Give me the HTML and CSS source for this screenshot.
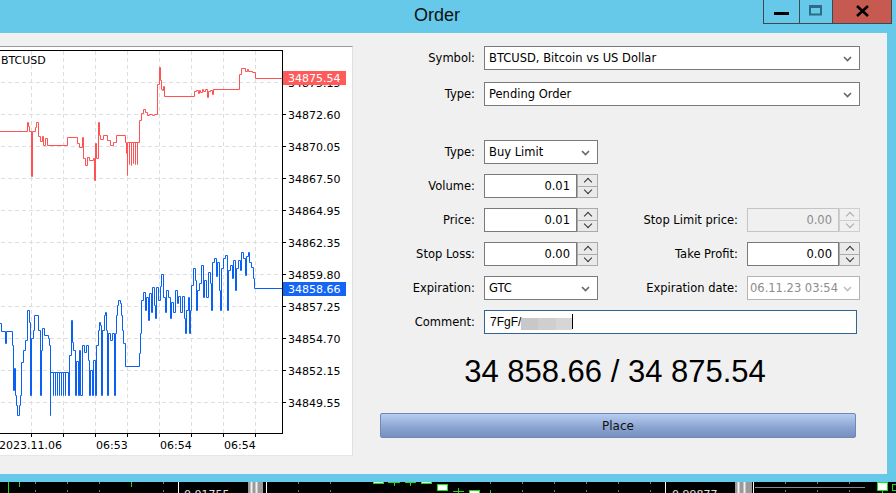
FILE: index.html
```html
<!DOCTYPE html>
<html lang="en">

<head>
  <meta charset="UTF-8">
  <meta name="viewport" content="width=device-width, initial-scale=1.0">
  <title>Order</title>
  <link rel="stylesheet" href="styles.css">
</head>

<body>
  <div class="window">
    <div class="titlebar">
      <span></span>
      <div class="title">Order</div>
      <div class="controls">
        <div class="ctl ctl_min"><svg width="16" height="4" viewBox="0 0 16 4"><rect x="0" y="0" width="15" height="3" fill="#000" /></svg></div>
        <div class="ctl ctl_max"><svg width="14" height="11" viewBox="0 0 14 11"><rect x="1" y="1.5" width="11" height="8" fill="none" stroke="#2d6c84" stroke-width="2" /><rect x="0" y="0" width="13" height="3" fill="#2d6c84" /></svg></div>
        <div class="ctl ctl_close"><svg width="13" height="12" viewBox="0 0 13 12"><path d="M1 1 L12 11 M12 1 L1 11" stroke="#000" stroke-width="2.6" /></svg></div>
      </div>
    </div>

    <div class="client">
      <!-- tick chart -->
      <div class="chart">
        <svg width="365" height="408" viewBox="-13 47 365 408" font-family="DejaVu Sans, sans-serif" font-size="11">
          <rect x="-13" y="47" width="365" height="408" fill="#fff" />
          <g stroke="#dedede" stroke-dasharray="4 3">
            <path d="M-13 82.5H282 M-13 114.5H282 M-13 146.5H282 M-13 178.5H282 M-13 210.5H282 M-13 242.5H282 M-13 274.5H282 M-13 306.5H282 M-13 338.5H282 M-13 370.5H282 M-13 402.5H282" />
            <path d="M31.5 51V433 M63.5 51V433 M95.5 51V433 M127.5 51V433 M159.5 51V433 M191.5 51V433 M223.5 51V433 M255.5 51V433" />
          </g>
          <g fill="none" stroke-width="1" transform="translate(0.5 0.5)">
            <polyline stroke="#ff5252" points="-13,131 27,131 27,122 28,122 28,126 29,126 29,131 31,131 31,176 32,176 32,131 35,131 35,127 36,127 36,122 38,122 38,136 40,136 40,141 42,141 42,136 43,136 43,145 45,145 45,138 47,138 47,145 67,145 67,137 77,137 77,143 79,143 79,147 82,147 82,137 83,137 83,158 85,158 85,165 87,165 87,157 89,157 89,160 93,160 93,158 94,158 94,180 95,180 95,143 96,143 96,158 98,158 98,122 99,122 99,135 100,135 100,139 103,139 103,135 107,135 107,140 110,140 110,145 113,145 113,142 116,142 116,135 125,135 125,142 126,142 126,153 127,153 127,175 127,142 129,142 129,164 129,142 131,142 131,165 131,142 133,142 133,163 133,142 135,142 135,164 135,142 137,142 137,164 137,142 139,142 139,120 141,120 141,113 143,113 143,109 145,109 145,112 147,112 147,115 149,115 149,114 152,114 152,115 154,115 154,114 157,114 157,84 159,84 159,67 160,67 160,80 161,80 161,89 162,89 162,90 163,90 163,86 164,86 164,96 194,96 194,91 196,91 196,90 198,90 198,93 199,93 199,90 200,90 200,92 202,92 202,89 203,89 203,91 205,91 205,89 207,89 207,97 208,97 208,91 210,91 210,90 212,90 212,94 213,94 213,89 239,89 239,74 241,74 241,68 245,68 245,71 247,71 247,69 248,69 248,71 252,71 252,72 255,72 255,78 282,78" />
            <polyline stroke="#0a60f2" points="-13,323 1,323 1,331 5,331 5,343 6,343 6,331 12,331 12,345 13,345 13,390 14,390 14,368 15,368 15,395 16,395 16,405 17,405 17,415 19,415 19,405 20,405 20,395 21,395 21,362 23,362 23,350 25,350 25,340 27,340 27,310 29,310 29,322 30,322 30,395 31,395 31,338 33,338 33,330 34,330 34,315 38,315 38,330 40,330 40,395 41,395 41,350 42,350 42,328 44,328 44,335 48,335 48,338 49,338 49,345 50,345 50,415 50,372 53,372 53,395 53,372 55,372 55,395 55,372 57,372 57,395 57,372 59,372 59,395 59,372 61,372 61,395 61,372 63,372 63,395 63,372 65,372 65,395 65,372 68,372 68,395 69,395 69,355 71,355 71,320 72,320 72,342 73,342 73,350 75,350 75,395 76,395 76,361 78,361 78,395 79,395 79,350 80,350 80,395 82,395 82,345 84,345 84,352 86,352 86,345 88,345 88,360 89,360 89,395 90,395 90,370 92,370 92,395 93,395 93,360 95,360 95,395 96,395 96,345 98,345 98,330 99,330 99,322 100,322 100,325 101,325 101,395 102,395 102,330 104,330 104,315 105,315 105,312 106,312 106,330 107,330 107,395 108,395 108,333 110,333 110,340 112,340 112,333 114,333 114,395 115,395 115,333 116,333 116,315 117,315 117,305 118,305 118,300 120,300 120,303 121,303 121,315 122,315 122,330 123,330 123,343 125,343 125,366 139,366 139,353 140,353 140,333 141,333 141,300 143,300 143,292 145,292 145,310 146,310 146,297 148,297 148,320 149,320 149,293 151,293 151,312 152,312 152,287 154,287 154,305 155,305 155,318 156,318 156,287 158,287 158,300 160,300 160,286 161,286 161,274 163,274 163,297 165,297 165,312 166,312 166,290 168,290 168,297 170,297 170,318 171,318 171,302 173,302 173,312 175,312 175,290 177,290 177,303 178,303 178,296 180,296 180,312 182,312 182,296 184,296 184,318 185,318 185,333 186,333 186,310 188,310 188,297 189,297 189,333 190,333 190,310 191,310 191,285 193,285 193,268 195,268 195,280 196,280 196,310 197,310 197,290 199,290 199,283 201,283 201,265 203,265 203,297 204,297 204,280 206,280 206,297 208,297 208,272 210,272 210,283 211,283 211,310 212,310 212,262 214,262 214,258 216,258 216,276 217,276 217,262 219,262 219,290 220,290 220,310 221,310 221,268 223,268 223,258 225,258 225,255 227,255 227,310 228,310 228,270 230,270 230,265 232,265 232,278 233,278 233,260 235,260 235,290 236,290 236,268 238,268 238,260 240,260 240,270 241,270 241,252 243,252 243,258 245,258 245,275 246,275 246,256 248,256 248,252 249,252 249,262 251,262 251,267 253,267 253,278 254,278 254,288 282,288" />
          </g>
          <rect x="-14" y="50.5" width="296.5" height="383" fill="none" stroke="#000" />
          <g stroke="#000">
            <path d="M282 82.5h4 M282 114.5h4 M282 146.5h4 M282 178.5h4 M282 210.5h4 M282 242.5h4 M282 274.5h4 M282 306.5h4 M282 338.5h4 M282 370.5h4 M282 402.5h4" />
            <path d="M31.5 433v4 M63.5 433v4 M95.5 433v4 M127.5 433v4 M159.5 433v4 M191.5 433v4 M223.5 433v4 M255.5 433v4" />
          </g>
          <text x="1" y="64" fill="#000">BTCUSD</text>
          <g fill="#000">
            <text x="288" y="87">34875.15</text>
            <text x="288" y="119">34872.60</text>
            <text x="288" y="151">34870.05</text>
            <text x="288" y="183">34867.50</text>
            <text x="288" y="215">34864.95</text>
            <text x="288" y="247">34862.35</text>
            <text x="288" y="279">34859.80</text>
            <text x="288" y="311">34857.25</text>
            <text x="288" y="343">34854.70</text>
            <text x="288" y="375">34852.15</text>
            <text x="288" y="407">34849.55</text>
          </g>
          <rect x="283" y="71" width="63" height="14" fill="#ff5b5b" />
          <text x="288" y="82" fill="#fff">34875.54</text>
          <rect x="283" y="282" width="63" height="14" fill="#1565f5" />
          <text x="288" y="293" fill="#fff">34858.66</text>
          <g fill="#000">
            <text x="-1" y="449">2023.11.06</text>
            <text x="96" y="449">06:53</text>
            <text x="160" y="449">06:54</text>
            <text x="224" y="449">06:54</text>
          </g>
        </svg>
      </div>

      <!-- order form -->
      <div class="order">
        <div class="grid grid_top">
          <div class="lbl">Symbol:</div>
          <div class="field select span3">BTCUSD, Bitcoin vs US Dollar<svg class="chev" width="9" height="6" viewBox="0 0 9 6"><path d="M1 1l3.5 3.5L8 1" fill="none" stroke="#666" stroke-width="1.6" /></svg></div>
          <div class="lbl">Type:</div>
          <div class="field select span3">Pending Order<svg class="chev" width="9" height="6" viewBox="0 0 9 6"><path d="M1 1l3.5 3.5L8 1" fill="none" stroke="#666" stroke-width="1.6" /></svg></div>
        </div>

        <div class="grid grid_main">
          <div class="lbl">Type:</div>
          <div class="field select">Buy Limit<svg class="chev" width="9" height="6" viewBox="0 0 9 6"><path d="M1 1l3.5 3.5L8 1" fill="none" stroke="#666" stroke-width="1.6" /></svg></div>
          <div></div>
          <div></div>

          <div class="lbl">Volume:</div>
          <div class="spin">
            <div class="field num">0.01</div>
            <div class="arrows"><span class="up"></span><span class="down"></span></div>
          </div>
          <div></div>
          <div></div>

          <div class="lbl">Price:</div>
          <div class="spin">
            <div class="field num">0.01</div>
            <div class="arrows"><span class="up"></span><span class="down"></span></div>
          </div>
          <div class="lbl">Stop Limit price:</div>
          <div class="spin disabled">
            <div class="field num">0.00</div>
            <div class="arrows"><span class="up"></span><span class="down"></span></div>
          </div>

          <div class="lbl">Stop Loss:</div>
          <div class="spin">
            <div class="field num">0.00</div>
            <div class="arrows"><span class="up"></span><span class="down"></span></div>
          </div>
          <div class="lbl">Take Profit:</div>
          <div class="spin">
            <div class="field num">0.00</div>
            <div class="arrows"><span class="up"></span><span class="down"></span></div>
          </div>

          <div class="lbl">Expiration:</div>
          <div class="field select">GTC<svg class="chev" width="9" height="6" viewBox="0 0 9 6"><path d="M1 1l3.5 3.5L8 1" fill="none" stroke="#666" stroke-width="1.6" /></svg></div>
          <div class="lbl">Expiration date:</div>
          <div class="field select dim">06.11.23 03:54<svg class="chev" width="9" height="6" viewBox="0 0 9 6"><path d="M1 1l3.5 3.5L8 1" fill="none" stroke="#c0c0c0" stroke-width="1.6" /></svg></div>

          <div class="lbl">Comment:</div>
          <div class="field comment span3">7FgF/<span class="blur"><i class="b1"></i><i class="b2"></i><i class="b3"></i></span><span class="caret"></span></div>
        </div>

        <div class="quote">34 858.66 / 34 875.54</div>
        <div class="place">Place</div>
      </div>
    </div>
  </div>

  <div class="strip">
    <svg width="896" height="11" viewBox="0 0 896 11" font-family="DejaVu Sans, sans-serif" font-size="11">
      <rect width="896" height="11" fill="#000" />
      <g stroke="#7a7a7a" stroke-dasharray="2 6">
        <path d="M35.5 0v11 M67.5 0v11 M99.5 0v11 M163.5 0v11 M298.5 0v11 M330.5 0v11 M490.5 0v11 M522.5 0v11 M554.5 0v11 M586.5 0v11 M618.5 0v11 M650.5 0v11 M785.5 0v11 M817.5 0v11 M849.5 0v11" />
      </g>
      <path d="M8.5 0v11 M19.5 0v5 M131.5 0v5" stroke="#18e018" stroke-width="1" />
      <path d="M178.5 0v11 M266.5 0v11 M665.5 0v11 M753.5 0v11" stroke="#fff" />
      <text x="184" y="16" fill="#e0e0e0">0.01755</text>
      <text x="672" y="16" fill="#e0e0e0">0.99877</text>
      <rect x="248" y="0" width="15" height="11" fill="#9a9a9a" />
      <path d="M251.5 0v11 M256.5 0v11" stroke="#f0f0f0" stroke-width="2" />
      <rect x="735" y="0" width="17" height="11" fill="#9a9a9a" />
      <path d="M738.5 0v11 M744.5 0v11" stroke="#f0f0f0" stroke-width="2" />
      <path d="M755 5.5h110" stroke="#8a8a8a" />
      <g stroke="#18e018" fill="#fff">
        <rect x="373.5" y="-3.5" width="10" height="5" />
        <rect x="421.5" y="-3.5" width="10" height="5" fill="#fff" />
        <rect x="437.5" y="2.5" width="10" height="6" />
        <rect x="469.5" y="8.5" width="10" height="5" />
        <rect x="877.5" y="0.5" width="10" height="8" />
        <rect x="892.5" y="2.5" width="6" height="6" fill="#000" />
        <path d="M388 0.5h12 M394.5 0v4 M405 0.5h11 M410.5 0v4 M453 9.5h11 M458.5 6v5 M490.5 8v3" fill="none" stroke-width="1" />
        <path d="M882.5 8v3" fill="none" />
      </g>
    </svg>
  </div>
</body>

</html>
```

FILE: styles.css
```css
body {
  margin: 0;
  width: 896px;
  height: 493px;
  overflow: hidden;
  font-family: 'DejaVu Sans', sans-serif;
  font-size: 11.5px;
  color: #000;
  background: #000;
}

/* window frame */
.window {
  margin-left: -22px;
  width: 918px;
  height: 482px;
  box-sizing: border-box;
  padding: 0 9px 8px 9px;
  background-color: #66c9ea;
  display: flex;
  flex-direction: column;
}

.titlebar {
  height: 33px;
  margin: 0 -9px;
  display: grid;
  grid-template-columns: 1fr auto 1fr;
  align-items: start;
}

.title {
  font-family: 'Liberation Sans', sans-serif;
  font-size: 18px;
  line-height: 30px;
  color: #111;
}

.controls {
  justify-self: end;
  margin-right: 4px;
  display: flex;
  border: 1px solid #3b4a52;
  border-top: none;
  height: 23px;
}

.ctl {
  display: flex;
  align-items: center;
  justify-content: center;
}

.ctl_min {
  width: 35px;
  border-right: 1px solid #3b4a52;
}

.ctl_min svg {
  margin-top: 5px;
}

.ctl_max {
  width: 32px;
  border-right: 1px solid #3b4a52;
}

.ctl_max svg {
  margin-top: -2px;
}

.ctl_close {
  width: 58px;
  background-color: #c75a50;
}

.ctl_close svg {
  margin-top: -1px;
}

/* client area */
.client {
  flex: 1;
  display: flex;
  background-color: #f0f0f0;
}

.chart {
  margin-top: 13px;
  width: 365px;
  height: 408px;
  border-top: 1px solid #9a9a9a;
  border-right: 1px solid #e0e0e0;
  border-bottom: 1px solid #e6e6e6;
}

.chart svg {
  display: block;
}

/* form */
.order {
  flex: 1;
  padding: 13px 0 0 22px;
}

.grid {
  display: grid;
  grid-template-columns: 109px 114px 149px 113px;
  grid-auto-rows: 24px;
}

.grid_top {
  row-gap: 12px;
}

.grid_main {
  margin-top: 34px;
  row-gap: 10px;
}

.lbl {
  display: flex;
  align-items: center;
  justify-content: flex-end;
  padding-right: 9px;
  white-space: nowrap;
}

.span3 {
  grid-column: 2 / span 3;
}

.field {
  box-sizing: border-box;
  height: 24px;
  border: 1px solid #7a7a7a;
  background-color: #fff;
  display: flex;
  align-items: center;
  white-space: nowrap;
}

.select {
  padding-left: 4px;
  position: relative;
}

.chev {
  position: absolute;
  right: 7px;
  top: 9px;
}

.dim {
  border-color: #b4b4b4;
  color: #8c8c8c;
  padding-left: 2px;
}

.spin {
  display: flex;
}

.num {
  flex: 1;
  justify-content: flex-end;
  padding-right: 6px;
}

.arrows {
  width: 21px;
  display: flex;
  flex-direction: column;
}

.arrows span {
  flex: 1;
  box-sizing: border-box;
  border: 1px solid #ababab;
  background-color: #eaeaea;
  display: flex;
  align-items: center;
  justify-content: center;
}

.arrows span + span {
  border-top: none;
}

.arrows span::after {
  content: '';
  width: 5px;
  height: 5px;
  border-left: 1.3px solid #333;
  border-top: 1.3px solid #333;
}

.arrows .up::after {
  transform: translateY(2px) rotate(45deg);
}

.arrows .down::after {
  transform: translateY(-2px) rotate(225deg);
}

.disabled .num {
  background-color: #f0f0f0;
  border-color: #c4c4c4;
  color: #8c8c8c;
}

.disabled .arrows span {
  border-color: #cfcfcf;
  background-color: #f0f0f0;
}

.disabled .arrows span::after {
  border-color: #a8a8a8;
}

.comment {
  margin-right: 3px;
  border-color: #2f6596;
  padding-left: 5px;
  font-family: 'Liberation Sans', sans-serif;
  font-size: 12px;
}

.blur {
  display: inline-flex;
  height: 12px;
  margin-top: 4px;
}

.blur i {
  display: block;
  height: 12px;
}

.b1 {
  width: 17px;
  background-color: #c8c8c8;
}

.b2 {
  width: 18px;
  background-color: #cfcfcf;
}

.b3 {
  width: 16px;
  background-color: #d6d6d6;
}

.caret {
  width: 1px;
  height: 15px;
  background-color: #000;
  margin-top: -2px;
}

/* bid / ask */
.quote {
  margin-top: 20px;
  width: 480px;
  text-align: center;
  font-family: 'Liberation Sans', sans-serif;
  font-size: 31px;
  line-height: 36px;
  color: #000;
}

.place {
  margin-top: 23px;
  margin-left: 5px;
  width: 476px;
  height: 25px;
  box-sizing: border-box;
  border: 1px solid #7088b5;
  border-radius: 2px;
  background: linear-gradient(#b7cdf2, #8aa2cf 60%, #7890c0);
  display: flex;
  align-items: center;
  justify-content: center;
  font-size: 12px;
  color: #111;
}

.strip {
  height: 11px;
  overflow: hidden;
}

.strip svg {
  display: block;
}
```
